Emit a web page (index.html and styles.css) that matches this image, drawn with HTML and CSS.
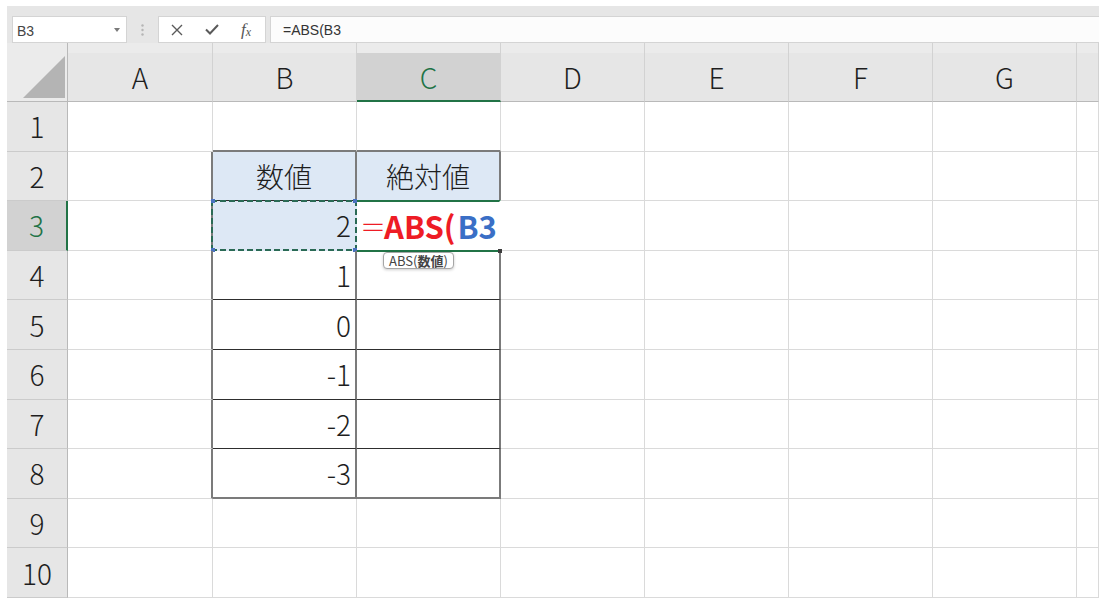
FILE: index.html
```html
<!DOCTYPE html>
<html lang="ja">
<head>
<meta charset="utf-8">
<title>ABS</title>
<link rel="stylesheet" href="styles.css">
</head>
<body>
<div class="app">
  <div class="toolbar">
    <div class="namebox"><span class="nb-text">B3</span><svg class="caret" width="6" height="4" viewBox="0 0 6 4"><path d="M0 0H6L3 4Z" fill="#7a7a7a"/></svg></div>
    <div class="grip"><svg width="3" height="12" viewBox="0 0 3 12"><circle cx="1.5" cy="1.5" r="1.2" fill="#b5b5b5"/><circle cx="1.5" cy="6" r="1.2" fill="#b5b5b5"/><circle cx="1.5" cy="10.5" r="1.2" fill="#b5b5b5"/></svg></div>
    <div class="fnbox">
      <svg class="ic" width="12" height="12" viewBox="0 0 12 12"><path d="M1 1L11 11M11 1L1 11" stroke="#5a5a5a" stroke-width="1.4" fill="none"/></svg>
      <svg class="ic" width="14" height="11" viewBox="0 0 14 11"><path d="M1 5.5L5 9.5L13 1" stroke="#5a5a5a" stroke-width="2" fill="none"/></svg>
      <span class="fx">f<sub>x</sub></span>
    </div>
    <div class="formula">=ABS(B3</div>
  </div>
  <div class="sheet">
    <div class="hd corner"><svg class="tri" width="42" height="42" viewBox="0 0 42 42"><path d="M42 0V42H0Z" fill="#b4b4b4"/></svg></div>
    <div class="hd col">A</div>
    <div class="hd col">B</div>
    <div class="hd col sel">C</div>
    <div class="hd col">D</div>
    <div class="hd col">E</div>
    <div class="hd col">F</div>
    <div class="hd col">G</div>
    <div class="hd col"></div>

    <div class="hd row">1</div>
    <div class="c"></div><div class="c tb-top"></div><div class="c tb-top"></div><div class="c"></div><div class="c"></div><div class="c"></div><div class="c"></div><div class="c"></div>

    <div class="hd row">2</div>
    <div class="c tb-left"></div><div class="c t head">数値</div><div class="c t head">絶対値</div><div class="c"></div><div class="c"></div><div class="c"></div><div class="c"></div><div class="c"></div>

    <div class="hd row selrow">3</div>
    <div class="c tb-left"></div>
    <div class="c t num copy">2<span class="ants"></span><span class="sq s1"></span><span class="sq s2"></span><span class="sq s3"></span><span class="sq s4"></span></div>
    <div class="c t edit"><span class="eq">＝</span><span class="red">ABS(</span><span class="blue">B3</span><span class="handle"></span><span class="tip">ABS(<b>数値</b>)</span></div>
    <div class="c"></div><div class="c"></div><div class="c"></div><div class="c"></div><div class="c"></div>

    <div class="hd row">4</div>
    <div class="c tb-left"></div><div class="c t num">1</div><div class="c t"></div><div class="c"></div><div class="c"></div><div class="c"></div><div class="c"></div><div class="c"></div>

    <div class="hd row">5</div>
    <div class="c tb-left"></div><div class="c t num">0</div><div class="c t"></div><div class="c"></div><div class="c"></div><div class="c"></div><div class="c"></div><div class="c"></div>

    <div class="hd row">6</div>
    <div class="c tb-left"></div><div class="c t num">-1</div><div class="c t"></div><div class="c"></div><div class="c"></div><div class="c"></div><div class="c"></div><div class="c"></div>

    <div class="hd row">7</div>
    <div class="c tb-left"></div><div class="c t num">-2</div><div class="c t"></div><div class="c"></div><div class="c"></div><div class="c"></div><div class="c"></div><div class="c"></div>

    <div class="hd row">8</div>
    <div class="c tb-left"></div><div class="c t num last">-3</div><div class="c t last"></div><div class="c"></div><div class="c"></div><div class="c"></div><div class="c"></div><div class="c"></div>

    <div class="hd row">9</div>
    <div class="c"></div><div class="c"></div><div class="c"></div><div class="c"></div><div class="c"></div><div class="c"></div><div class="c"></div><div class="c"></div>

    <div class="hd row">10</div>
    <div class="c"></div><div class="c"></div><div class="c"></div><div class="c"></div><div class="c"></div><div class="c"></div><div class="c"></div><div class="c"></div>
  </div>
</div>
</body>
</html>
```
FILE: styles.css
```css
* { box-sizing: border-box; }
html, body { margin: 0; padding: 0; background: #fff; }
body {
  width: 1108px;
  height: 609px;
  overflow: hidden;
  font-family: "Noto Sans CJK JP", "Noto Sans", sans-serif;
  font-weight: 300;
  color: #222;
}
.app {
  margin: 6px 0 0 7px;
  width: 1092px;
}
.toolbar {
  height: 37px;
  background: #e6e6e6;
  padding: 10px 0 0 5px;
  display: flex;
  align-items: stretch;
}
.namebox {
  width: 115px;
  background: #fff;
  border: 1px solid #d4d4d4;
  display: flex;
  align-items: center;
  justify-content: space-between;
  padding: 0 6px 0 4px;
  font-family: "Liberation Sans", Arial, sans-serif;
  font-weight: 400;
  font-size: 14px;
  color: #444;
}
.nb-text { padding-top: 2px; }
.caret { margin-top: 1px; }
.grip {
  width: 31px;
  display: flex;
  align-items: center;
  justify-content: center;
}
.fnbox {
  width: 108px;
  background: #fff;
  border: 1px solid #d4d4d4;
  display: flex;
  align-items: center;
  justify-content: space-between;
  padding: 0 14px 0 12px;
}
.fx {
  font-family: "Liberation Serif", serif;
  font-style: italic;
  font-weight: 400;
  font-size: 17px;
  color: #555;
  line-height: 1;
}
.fx sub { font-size: 12px; vertical-align: -1px; }
.formula {
  flex: 1;
  margin-left: 4px;
  background: #fcfcfc;
  border: 1px solid #d4d4d4;
  border-right: none;
  font-family: "Liberation Sans", Arial, sans-serif;
  font-weight: 400;
  font-size: 14px;
  color: #333;
  padding: 5px 0 0 12px;
}
.sheet {
  display: grid;
  grid-template-columns: 61px 145px repeat(6, 144px) 22px;
  grid-template-rows: 59px repeat(10, 49.6px);
}
.hd {
  background: #e6e6e6;
  color: #1e1e1e;
  font-size: 28px;
  display: flex;
  align-items: center;
  justify-content: center;
  line-height: 1;
}
.col {
  padding-top: 10px;
  border-right: 1px solid #d2d2d2;
  border-bottom: 1px solid #b9b9b9;
  background: linear-gradient(#ebebeb 0 10px, #e6e6e6 10px);
}
.col.sel {
  background: linear-gradient(#ebebeb 0 10px, #d2d2d2 10px);
  color: #217346;
  border-bottom: 2px solid #217346;
}
.corner {
  background: #ebebeb;
  border-right: 1px solid #b9b9b9;
  border-bottom: 1px solid #b9b9b9;
  align-items: flex-end;
  justify-content: flex-end;
  padding: 0 2px 3px 0;
}
.row {
  border-right: 1px solid #b9b9b9;
  border-bottom: 1px solid #cbcbcb;
}
.row.selrow {
  background: #d2d2d2;
  color: #217346;
  border-right: 2px solid #217346;
}
.c {
  position: relative;
  border-right: 1px solid #dadada;
  border-bottom: 1px solid #dadada;
  font-size: 28px;
  line-height: 1;
  display: flex;
  align-items: center;
  color: #1e1e1e;
}
.tb-top { border-bottom: 2px solid #7b7b7b; }
.tb-left { border-right: 2px solid #7b7b7b; }
.t {
  border-right: 2px solid #7b7b7b;
  border-bottom: 1px solid #2e2e2e;
}
.t.last { border-bottom: 2px solid #7b7b7b; }
.head {
  background: #dde8f5;
  justify-content: center;
}
.num {
  justify-content: flex-end;
  padding-right: 4px;
}
.copy {
  background: #dde8f5;
  border-bottom-color: transparent;
  border-right-color: transparent;
}
.ants {
  position: absolute;
  left: -2px; right: -2px; top: -1px; bottom: -1px;
  background:
    repeating-linear-gradient(90deg, #2a6a55 0 6px, transparent 6px 9px) top left / 100% 2px no-repeat,
    repeating-linear-gradient(90deg, #2a6a55 0 6px, transparent 6px 9px) bottom left / 100% 2px no-repeat,
    repeating-linear-gradient(180deg, #2a6a55 0 6px, transparent 6px 9px) top left / 2px 100% no-repeat,
    repeating-linear-gradient(180deg, #2a6a55 0 6px, transparent 6px 9px) top right / 2px 100% no-repeat;
}
.sq {
  position: absolute;
  width: 4px; height: 4px;
  background: #4a72c0;
}
.s1 { left: -2px; top: -2px; }
.s2 { right: -2px; top: -2px; }
.s3 { left: -2px; bottom: -2px; }
.s4 { right: -2px; bottom: -2px; }
.edit {
  background: #fff;
  border-top: 2px solid #217346;
  border-bottom: 2px solid #217346;
  border-right: 2px solid #fff;
  margin-top: -1px;
  margin-bottom: -1px;
  padding-left: 3px;
  font-weight: 700;
  font-size: 31px;
  z-index: 2;
  white-space: nowrap;
}
.eq { color: #ee1c25; font-weight: 300; font-size: 26px; margin-right: -2px; }
.red { color: #ee1c25; }
.blue { color: #3a6fc6; margin-left: 2px; }
.handle {
  position: absolute;
  right: -3px; bottom: -3px;
  width: 4px; height: 4px;
  background: #3c3c3c;
}
.tip {
  position: absolute;
  left: 26px;
  top: calc(100% + 2px);
  font-family: "Noto Sans CJK JP", sans-serif;
  font-size: 13px;
  font-weight: 400;
  color: #444;
  line-height: 15px;
  background: #fff;
  border: 1px solid #a6a6a6;
  border-radius: 4px;
  padding: 0 5px;
  box-shadow: 0 1px 3px rgba(0,0,0,0.2);
  white-space: nowrap;
}
.tip b { font-weight: 700; }
```
